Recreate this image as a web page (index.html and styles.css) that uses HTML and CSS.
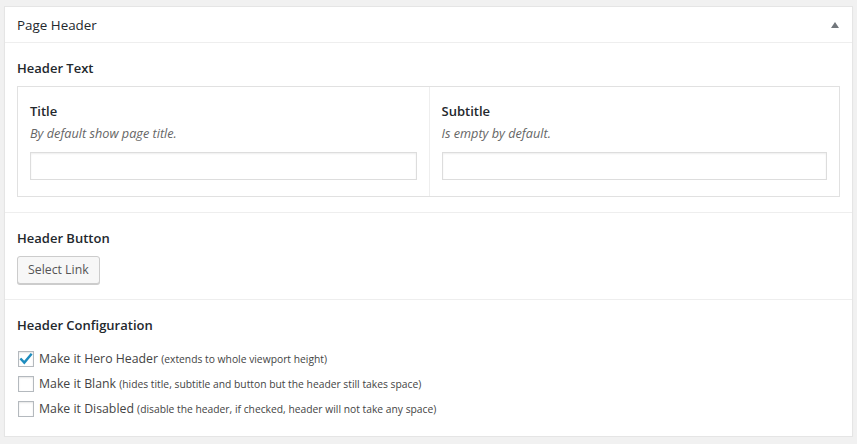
FILE: index.html
```html
<!DOCTYPE html>
<html lang="en">
<head>
<meta charset="utf-8">
<title>Page Header</title>
<link rel="stylesheet" href="styles.css">
</head>
<body>
<div class="postbox">
  <div class="postbox-header">
    <h2 class="postbox-title">Page Header</h2>
    <span class="toggle-arrow" aria-hidden="true"></span>
  </div>
  <div class="field">
    <div class="field-label">Header Text</div>
    <div class="group">
      <div class="subfield">
        <div class="sub-label">Title</div>
        <p class="desc">By default show page title.</p>
        <input class="text-input" type="text">
      </div>
      <div class="subfield">
        <div class="sub-label">Subtitle</div>
        <p class="desc">Is empty by default.</p>
        <input class="text-input" type="text">
      </div>
    </div>
  </div>
  <div class="field">
    <div class="field-label">Header Button</div>
    <button class="button" type="button">Select Link</button>
  </div>
  <div class="field">
    <div class="field-label">Header Configuration</div>
    <ul class="checklist">
      <li class="check-row">
        <span class="checkbox checked"><svg viewBox="0 0 16 16" width="16" height="16"><path d="M3.2 8.4 L6.3 11.6 L12.9 3.6" fill="none" stroke="#1e8cbe" stroke-width="2.4" stroke-linecap="square"/></svg></span>
        <span class="check-text">Make it Hero Header <small class="note">(extends to whole viewport height)</small></span>
      </li>
      <li class="check-row">
        <span class="checkbox"></span>
        <span class="check-text">Make it Blank <small class="note">(hides title, subtitle and button but the header still takes space)</small></span>
      </li>
      <li class="check-row">
        <span class="checkbox"></span>
        <span class="check-text">Make it Disabled <small class="note">(disable the header, if checked, header will not take any space)</small></span>
      </li>
    </ul>
  </div>
</div>
</body>
</html>
```
FILE: styles.css
```css
html, body {
  margin: 0;
  padding: 0;
}
body {
  background: #f1f1f1;
  padding: 6px 4px 0 4px;
  font-family: "Open Sans", "Noto Sans", sans-serif;
  color: #444;
}
.postbox {
  background: #fff;
  border: 1px solid #e5e5e5;
  box-shadow: 0 1px 1px rgba(0,0,0,0.04);
}
.postbox-header {
  display: flex;
  align-items: center;
  justify-content: space-between;
  height: 35px;
  padding: 0 13px 0 12px;
  border-bottom: 1px solid #eee;
}
.postbox-title {
  margin: 0;
  font-size: 13.4px;
  font-weight: 400;
  color: #23282d;
  line-height: 20px;
}
.toggle-arrow {
  width: 0;
  height: 0;
  border-left: 4.5px solid transparent;
  border-right: 4.5px solid transparent;
  border-bottom: 6px solid #72777c;
}
.field {
  padding: 15px 12px;
  border-top: 1px solid #eee;
}
.postbox-header + .field {
  border-top: 0;
}
.field-label {
  font-size: 13px;
  font-weight: 600;
  color: #23282d;
  line-height: 20px;
  margin-bottom: 8px;
}
.group {
  display: grid;
  grid-template-columns: 1fr 1fr;
  border: 1px solid #e1e1e1;
}
.subfield {
  padding: 15px 12px 16px;
}
.subfield + .subfield {
  border-left: 1px solid #eee;
}
.sub-label {
  font-size: 13px;
  font-weight: 600;
  color: #23282d;
  line-height: 18px;
  margin-bottom: 3px;
}
.desc {
  margin: 0 0 9px;
  font-size: 12.7px;
  font-style: italic;
  color: #666;
  line-height: 20px;
}
.text-input {
  display: block;
  box-sizing: border-box;
  width: 100%;
  height: 28px;
  margin: 0;
  border: 1px solid #ddd;
  box-shadow: inset 0 1px 2px rgba(0,0,0,0.07);
  background: #fff;
  font: inherit;
}
.button {
  box-sizing: border-box;
  height: 28px;
  padding: 0 10px 1px;
  margin: 0;
  font-family: inherit;
  font-size: 12.3px;
  color: #555;
  background: #f7f7f7;
  border: 1px solid #ccc;
  border-radius: 3px;
  box-shadow: 0 1px 0 #ccc;
  line-height: 26px;
}
.checklist {
  list-style: none;
  margin: 0;
  padding: 3px 0 0;
}
.check-row {
  display: flex;
  align-items: center;
  height: 25px;
}
.checkbox {
  box-sizing: border-box;
  width: 16px;
  height: 16px;
  margin: 0 5px 0 1px;
  border: 1px solid #b4b9be;
  background: #fff;
  box-shadow: inset 0 1px 2px rgba(0,0,0,0.1);
  position: relative;
  flex: none;
}
.checkbox svg {
  position: absolute;
  left: -1px;
  top: -1px;
}
.check-text {
  font-size: 12.3px;
  color: #444;
  line-height: 20px;
}
.note {
  font-size: 10.3px;
  color: #444;
}
```
